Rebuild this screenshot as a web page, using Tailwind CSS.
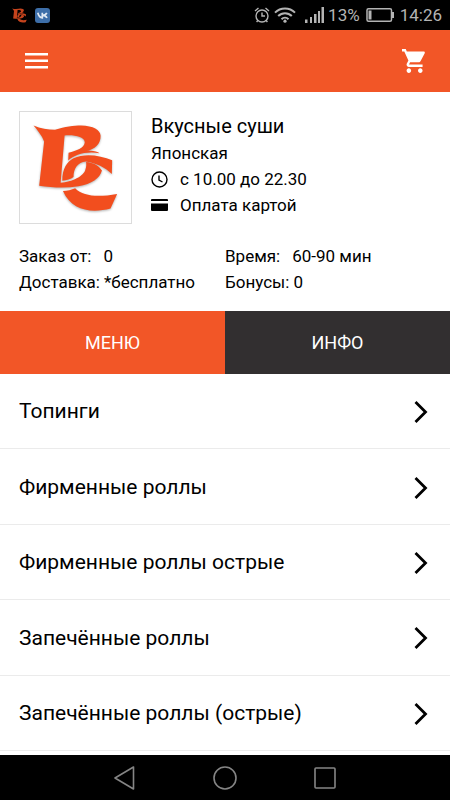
<!DOCTYPE html>
<html lang="ru">
<head>
<meta charset="utf-8">
<meta name="viewport" content="width=device-width, initial-scale=1">
<title>Вкусные суши</title>
<script src="https://cdn.jsdelivr.net/npm/@tailwindcss/browser@4"></script>
</head>
<body class="flex min-h-screen flex-col bg-white font-['Roboto','Noto_Sans',sans-serif] text-black">

<svg class="hidden" aria-hidden="true">
  <symbol id="logo" viewBox="28 34 336 336">
    <path d="M69 75C90 84 112 88 134 88C165 78 190 75 213 75C250 76 271 88 272 106C273 132 252 147 231 152C247 150 262 153 269 159C225 152 193 164 174 181L175 157C199 151 222 143 224 126C225 109 190 102 163 105L151 248C185 246 222 228 226 208C229 200 229 192 228 185C250 187 266 195 276 211C270 235 245 251 205 259C165 265 125 263 86 257L101 123C94 105 82 91 69 75Z"/>
    <path d="M156 242C156 205 170 185 190 174C222 158 270 164 307 180L306 222C284 200 260 190 227 184C203 186 190 205 190 231C182 238 168 241 156 242Z"/>
    <path d="M158 273C171 273 184 270 195 265C220 291 268 292 322 282L302 326C245 341 184 333 158 273Z"/>
  </symbol>
  <symbol id="chevron" viewBox="0 0 14 24">
    <path d="M1.500 2L11.500 12L1.500 22" fill="none" stroke="currentColor" stroke-width="2.800"/>
  </symbol>
</svg>

<div class="flex h-[30px] items-center justify-between bg-black pl-3 pr-2 text-[#b4b4b4]">
  <div class="flex items-center gap-2">
    <svg class="size-[15px] text-[#c4431d]" viewBox="66 68 260 272" fill="currentColor" preserveAspectRatio="none" aria-hidden="true"><use href="#logo" x="28" y="34" width="336" height="336"/></svg>
    <svg class="size-[15px]" viewBox="0 0 15 15" aria-hidden="true">
      <rect width="15" height="15" rx="3" fill="#3d6ea8"/>
      <path d="M2.800 4.800C3.600 8 5 9.800 7.300 9.800V4.800M11.800 4.800C11 6.500 9.500 7.300 7.300 7.300C9.500 7.400 11.200 8.200 12 9.900" fill="none" stroke="#dfe8f2" stroke-width="1.700"/>
    </svg>
  </div>
  <div class="flex items-center">
    <svg class="mr-1 h-4 w-4" viewBox="0 0 16 16" fill="none" stroke="currentColor" stroke-width="1.400" aria-hidden="true">
      <circle cx="8" cy="9" r="6"/><path d="M8 5.500V9H11M1 4L4.500 1M15 4L11.500 1M4 13.300L2.600 15M12 13.300L13.400 15"/>
    </svg>
    <svg class="mr-2 h-4 w-[22px]" viewBox="0 0 22 16" fill="none" stroke="currentColor" stroke-width="2" aria-hidden="true">
      <path d="M1 5.600C6.500 .1 15.500 .1 21 5.600M4.200 9C8 5.200 14 5.200 17.800 9M7.500 12.200C9.500 10.200 12.500 10.200 14.500 12.200"/><circle cx="11" cy="14.200" r="1.600" fill="currentColor" stroke="none"/>
    </svg>
    <svg class="mr-1 h-4 w-5" viewBox="0 0 20 16" fill="currentColor" aria-hidden="true">
      <path d="M1 12.500h2.500V16H1zM6 10h2v6H6zM10 7h2.500v9H10zM14 4h2v12h-2zM17.500 0H20v16h-2.500z"/>
    </svg>
    <span class="text-[17px] leading-5">13%</span>
    <svg class="ml-1.5 mr-1.5 h-4 w-7" viewBox="0 0 28 16" aria-hidden="true">
      <rect x="1" y="1.700" width="24.500" height="12.600" rx="1.500" fill="none" stroke="currentColor" stroke-width="1.500"/>
      <path d="M2.500 3.500h3v9h-3zM26 5h2v6h-2z" fill="currentColor"/>
    </svg>
    <span class="text-[17px] leading-5">14:26</span>
  </div>
</div>

<header class="flex h-[62px] items-center justify-between bg-[#f25627] px-6 text-white">
  <button type="button" aria-label="Меню" class="flex h-8 w-6 items-center">
    <svg class="h-4 w-6" viewBox="0 0 24 16" fill="currentColor" aria-hidden="true"><path d="M1 0h23v2.500H1zM1 6.500h23V9H1zM1 13h23v2.500H1z"/></svg>
  </button>
  <button type="button" aria-label="Корзина" class="flex size-6 items-center">
    <svg class="size-6" viewBox="1 2 21 20" fill="currentColor" preserveAspectRatio="none" aria-hidden="true"><path d="M7 18c-1.100 0-1.990.9-1.990 2S5.900 22 7 22s2-.9 2-2-.9-2-2-2zM1 2v2h2l3.600 7.590-1.350 2.450c-.16.280-.25.610-.25.960 0 1.100.9 2 2 2h12v-2H7.420c-.14 0-.25-.11-.25-.25l.03-.12.900-1.630h7.450c.75 0 1.410-.41 1.750-1.030l3.580-6.490c.08-.14.120-.31.120-.48 0-.55-.45-1-1-1H5.210l-.94-2H1zm16 16c-1.100 0-1.990.9-1.990 2s.89 2 1.990 2 2-.9 2-2-.9-2-2-2z"/></svg>
  </button>
</header>

<main class="flex grow flex-col">
  <section class="px-[19px] pb-4 pt-[19px]">
    <div class="flex gap-[19px]">
      <div class="size-[113px] shrink-0 border border-[#dcdcdc]">
        <svg class="size-full text-[#f24e1e] drop-shadow-[0_1px_1px_rgba(0,0,0,0.3)]" fill="currentColor" role="img" aria-label="Логотип Вкусные суши"><use href="#logo"/></svg>
      </div>
      <div>
        <h1 class="pt-px text-[20px] leading-7">Вкусные суши</h1>
        <p class="text-[17px] leading-[26px]">Японская</p>
        <p class="flex items-center gap-3 text-[17px] leading-[26px]">
          <svg class="size-[17px]" viewBox="0 0 17 17" fill="none" stroke="currentColor" stroke-width="1.400" aria-hidden="true"><circle cx="8.500" cy="8.500" r="7.500"/><path d="M8 4.500V9L11.500 11"/></svg>
          с 10.00 до 22.30
        </p>
        <p class="flex items-center gap-3 text-[17px] leading-[26px]">
          <svg class="h-3 w-[17px]" viewBox="0 0 17 12" fill="currentColor" aria-hidden="true"><path d="M1 0h15a1 1 0 0 1 1 1v1H0V1a1 1 0 0 1 1-1zM0 4.500h17V11a1 1 0 0 1-1 1H1a1 1 0 0 1-1-1z"/></svg>
          Оплата картой
        </p>
      </div>
    </div>
    <div class="mt-[19px] grid grid-cols-2 text-[17px] leading-[26px]">
      <dl>
        <div class="flex gap-3"><dt>Заказ от:</dt><dd>0</dd></div>
        <div class="flex gap-1"><dt>Доставка:</dt><dd>*бесплатно</dd></div>
      </dl>
      <dl>
        <div class="flex gap-3"><dt>Время:</dt><dd>60-90 мин</dd></div>
        <div class="flex gap-1"><dt>Бонусы:</dt><dd>0</dd></div>
      </dl>
    </div>
  </section>

  <div class="grid h-[63px] grid-cols-2 text-[18px] text-white" role="tablist">
    <button type="button" role="tab" aria-selected="true" class="bg-[#f25627]">МЕНЮ</button>
    <button type="button" role="tab" aria-selected="false" class="bg-[#322f30]">ИНФО</button>
  </div>

  <nav class="grid grow auto-rows-fr pb-1 text-[21px]">
    <a href="#toppings" class="flex items-center justify-between border-b border-[#ebebeb] pl-[19px] pr-[22px] pt-0.5">Топинги<svg class="h-6 w-3.5" aria-hidden="true"><use href="#chevron"/></svg></a>
    <a href="#signature" class="flex items-center justify-between border-b border-[#ebebeb] pl-[19px] pr-[22px] pt-0.5">Фирменные роллы<svg class="h-6 w-3.5" aria-hidden="true"><use href="#chevron"/></svg></a>
    <a href="#signature-spicy" class="flex items-center justify-between border-b border-[#ebebeb] pl-[19px] pr-[22px] pt-0.5">Фирменные роллы острые<svg class="h-6 w-3.5" aria-hidden="true"><use href="#chevron"/></svg></a>
    <a href="#baked" class="flex items-center justify-between border-b border-[#ebebeb] pl-[19px] pr-[22px] pt-0.5">Запечённые роллы<svg class="h-6 w-3.5" aria-hidden="true"><use href="#chevron"/></svg></a>
    <a href="#baked-spicy" class="flex items-center justify-between border-b border-[#ebebeb] pl-[19px] pr-[22px] pt-0.5">Запечённые роллы (острые)<svg class="h-6 w-3.5" aria-hidden="true"><use href="#chevron"/></svg></a>
  </nav>
</main>

<footer class="flex h-[45px] items-center justify-center gap-[76px] bg-black text-[#858585]">
  <button type="button" aria-label="Назад" class="size-6"><svg class="size-6" viewBox="0 0 24 24" fill="none" stroke="currentColor" stroke-width="1.600" stroke-linejoin="round" aria-hidden="true"><path d="M20.500 1V23L2 12Z"/></svg></button>
  <button type="button" aria-label="Домой" class="size-6"><svg class="size-6" viewBox="0 0 24 24" fill="none" stroke="currentColor" stroke-width="1.600" aria-hidden="true"><circle cx="12" cy="12" r="11"/></svg></button>
  <button type="button" aria-label="Недавние" class="size-6"><svg class="size-6" viewBox="0 0 24 24" fill="none" stroke="currentColor" stroke-width="1.600" aria-hidden="true"><rect x="2" y="2" width="20" height="20" rx="1"/></svg></button>
</footer>
</body>
</html>
